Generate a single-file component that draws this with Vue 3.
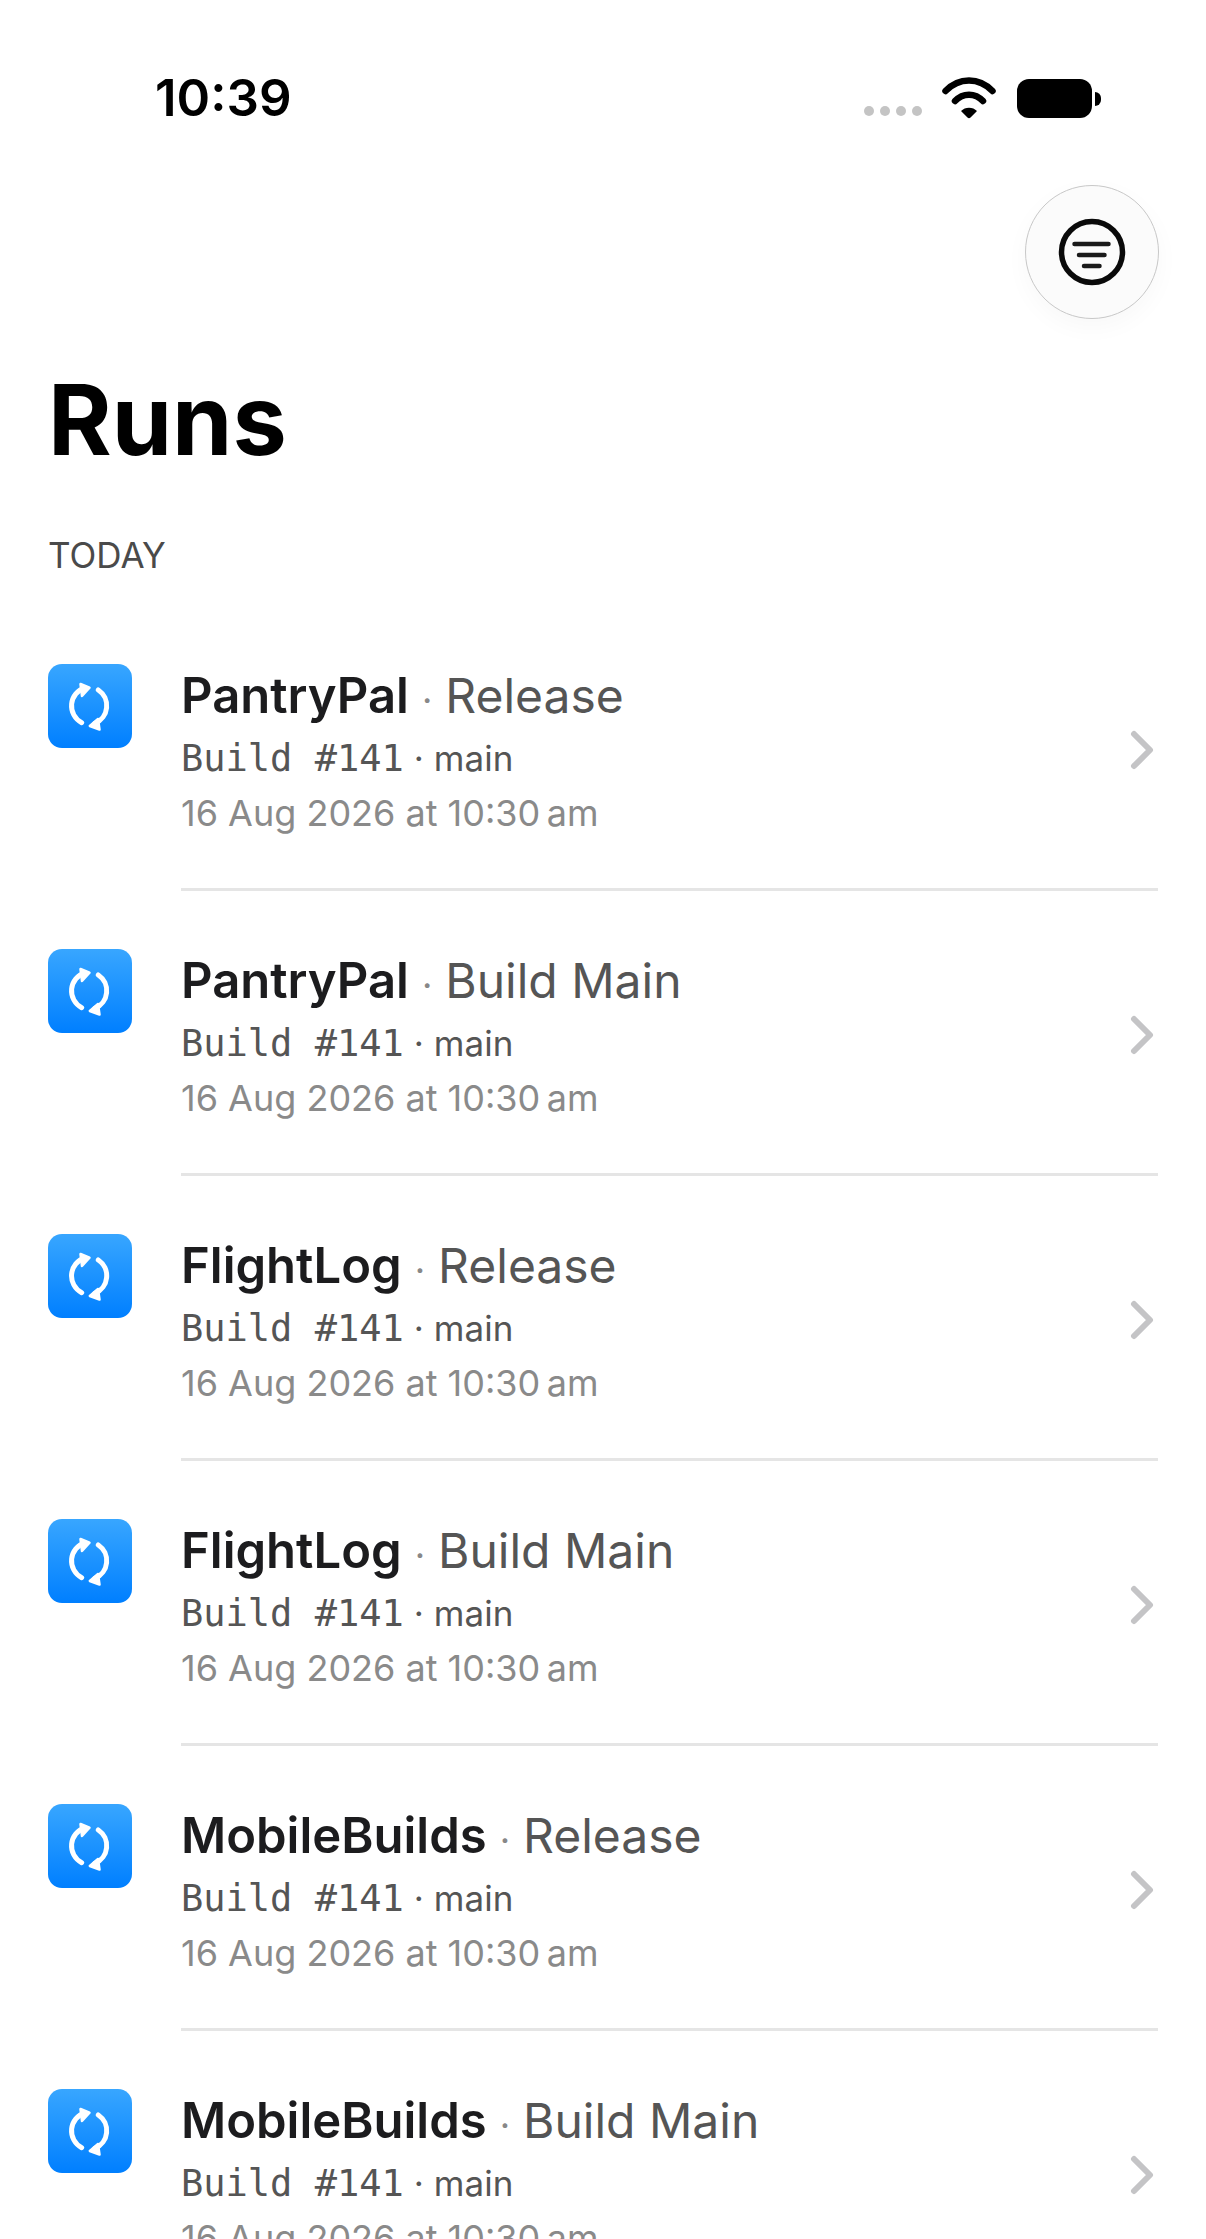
<template>
  <div class="screen">
    <header class="status-bar">
      <span class="time">10:39</span>
      <div class="status-icons">
        <div class="signal">
          <i v-for="n in 4" :key="n"></i>
        </div>
        <svg class="wifi" width="54" height="42" viewBox="0 0 54 42">
          <path d="M3.5 14C17 0 37 0 50.5 14" fill="none" stroke="#000" stroke-width="6.5" stroke-linecap="round" />
          <path d="M13 24C21 15.5 33 15.5 41 24" fill="none" stroke="#000" stroke-width="6.5" stroke-linecap="round" />
          <path d="M19 34C23 29.5 31 29.5 35 34L28.5 40.5C27.6 41.4 26.4 41.4 25.5 40.5Z" fill="#000" />
        </svg>
        <div class="battery"><span class="cell"></span><span class="tip"></span></div>
      </div>
    </header>

    <div class="toolbar">
      <button class="filter-btn">
        <svg width="68" height="68" viewBox="0 0 68 68">
          <circle cx="34" cy="34" r="30.5" fill="none" stroke="#0a0a0a" stroke-width="5.5" />
          <path d="M16.5 26H50.5M21 37H46.5M26 48H41.5" fill="none" stroke="#1a1a1a" stroke-width="4.5" stroke-linecap="round" />
        </svg>
      </button>
    </div>

    <h1 class="page-title">Runs</h1>
    <div class="section-label">TODAY</div>

    <ul class="run-list">
      <li v-for="run in runs" :key="run.id" class="run-row">
        <div class="run-icon">
          <svg width="84" height="84" viewBox="0 0 84 84">
            <path d="M33.7 58.7A19 19 0 0 1 37 23.7" fill="none" stroke="#fff" stroke-width="5" stroke-linecap="round" />
            <path d="M50.3 26A19 19 0 0 1 47 59.3" fill="none" stroke="#fff" stroke-width="5" stroke-linecap="round" />
            <path d="M32.5 20L41.5 23.7L34 32Z" fill="#fff" stroke="#fff" stroke-width="2.5" stroke-linejoin="round" />
            <path d="M41.8 62L51.5 65.5L50 55Z" fill="#fff" stroke="#fff" stroke-width="2.5" stroke-linejoin="round" />
          </svg>
        </div>
        <div class="run-main">
          <div class="run-text">
            <div class="run-title">
              <span class="app">{{ run.app }}</span>
              <span class="sep">·</span>
              <span class="workflow">{{ run.workflow }}</span>
            </div>
            <div class="run-build">
              <span class="mono">Build #141</span><span class="dot">·</span><span>main</span>
            </div>
            <div class="run-date">16 Aug 2026 at 10:30&#8201;am</div>
          </div>
          <svg class="chevron" width="24" height="40" viewBox="0 0 24 40">
            <path d="M4 4L20 20L4 36" fill="none" stroke="#c4c4c6" stroke-width="6" stroke-linecap="round" stroke-linejoin="round" />
          </svg>
        </div>
      </li>
    </ul>
  </div>
</template>

<script setup>
const runs = [
  { id: 1, app: 'PantryPal', workflow: 'Release' },
  { id: 2, app: 'PantryPal', workflow: 'Build Main' },
  { id: 3, app: 'FlightLog', workflow: 'Release' },
  { id: 4, app: 'FlightLog', workflow: 'Build Main' },
  { id: 5, app: 'MobileBuilds', workflow: 'Release' },
  { id: 6, app: 'MobileBuilds', workflow: 'Build Main' }
]
</script>

<style>
html, body {
  margin: 0;
  background: #fff;
}
</style>

<style scoped>
.screen {
  width: 1206px;
  height: 2239px;
  overflow: hidden;
  background: #fff;
  font-family: Inter, "Noto Sans", sans-serif;
}

.status-bar {
  display: flex;
  justify-content: space-between;
  align-items: flex-start;
  height: 185px;
  box-sizing: border-box;
  padding: 66px 105px 0 155px;
}

.time {
  font-size: 51px;
  line-height: 63px;
  font-weight: 600;
  color: #000;
}

.status-icons {
  display: flex;
  align-items: flex-start;
  padding-top: 11px;
}

.signal {
  display: flex;
  gap: 6px;
  margin-top: 29px;
  margin-right: 20px;
}

.signal i {
  width: 10px;
  height: 10px;
  border-radius: 50%;
  background: #c4c4c4;
}

.wifi {
  margin-right: 21px;
}

.battery {
  display: flex;
  align-items: center;
  margin-top: 2px;
  gap: 3px;
}

.cell {
  width: 75px;
  height: 39px;
  border-radius: 12px;
  background: #000;
}

.tip {
  width: 6px;
  height: 14px;
  border-radius: 0 7px 7px 0;
  background: #000;
}

.toolbar {
  display: flex;
  justify-content: flex-end;
  padding-right: 47px;
}

.filter-btn {
  display: flex;
  align-items: center;
  justify-content: center;
  width: 134px;
  height: 134px;
  padding: 0;
  border: 1.5px solid #c8c8c8;
  border-radius: 50%;
  background: #fbfbfb;
  box-shadow: 0 8px 24px rgba(0, 0, 0, 0.03);
}

.page-title {
  margin: 46px 0 0 48px;
  font-size: 97px;
  line-height: 110px;
  font-weight: 700;
  color: #000;
}

.section-label {
  margin: 60px 0 0 48px;
  font-size: 35px;
  line-height: 40px;
  color: #4a4a4a;
}

.run-list {
  list-style: none;
  margin: 0;
  padding: 0;
  margin-top: 31px;
}

.run-row {
  display: flex;
  height: 285px;
  box-sizing: border-box;
  padding: 0 48px;
  gap: 49px;
}

.run-icon {
  flex: none;
  width: 84px;
  height: 84px;
  margin-top: 58px;
  border-radius: 14px;
  background: linear-gradient(180deg, #38a6ff, #007fff);
}

.run-main {
  flex: 1;
  display: flex;
  justify-content: space-between;
  align-items: center;
  border-bottom: 3px solid #e5e5e5;
}

.run-text {
  margin-top: 10px;
}

.run-title {
  font-size: 48px;
  line-height: 62px;
  color: #555;
  white-space: nowrap;
}

.app {
  font-size: 49px;
  font-weight: 600;
  color: #1c1c1e;
}

.sep {
  margin: 0 13px;
  font-size: 36px;
  color: #888;
}

.run-build {
  font-size: 35px;
  line-height: 54px;
  color: #555;
}

.mono {
  font-family: "DejaVu Sans Mono", "Liberation Mono", monospace;
  font-size: 37px;
}

.dot {
  margin: 0 10px;
}

.run-date {
  font-size: 36px;
  line-height: 54px;
  color: #8a8a8a;
}

.chevron {
  margin-right: 4px;
  margin-top: 6px;
}
</style>
